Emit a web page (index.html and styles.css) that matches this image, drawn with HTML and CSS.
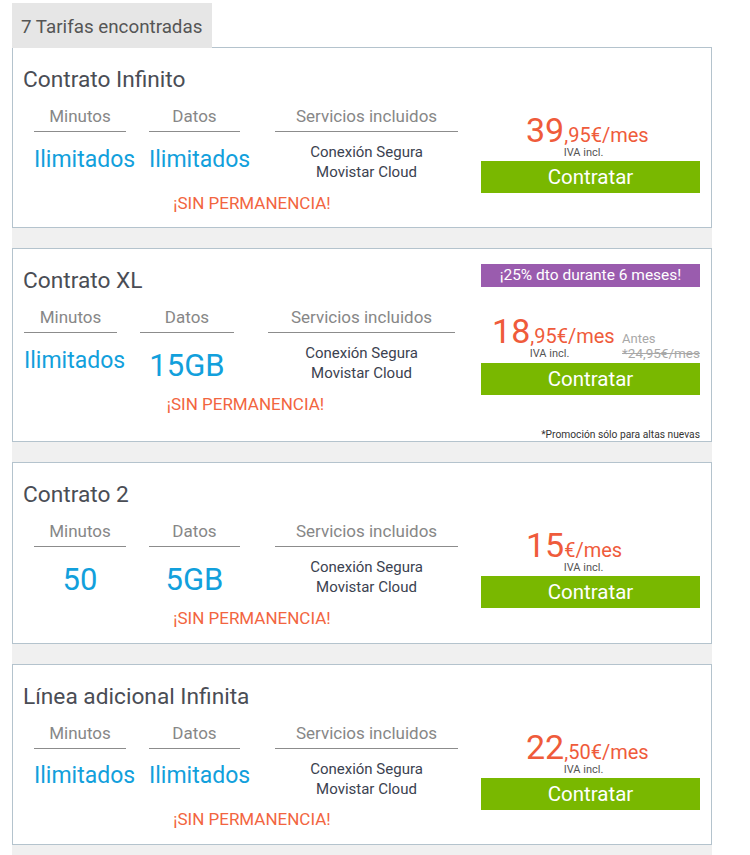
FILE: index.html
```html
<!DOCTYPE html>
<html lang="es">
<head>
<meta charset="utf-8">
<title>Tarifas</title>
<link rel="stylesheet" href="styles.css">
</head>
<body>
<div class="page">
  <div class="tab">7 Tarifas encontradas</div>
  <div class="plans">

    <article class="plan">
      <div class="plan-main">
        <h2 class="plan-title">Contrato Infinito</h2>
        <div class="specs">
          <div class="spec-head spec--min">Minutos</div>
          <div class="spec-head spec--data">Datos</div>
          <div class="spec-head spec--svc">Servicios incluidos</div>
          <div class="spec-value spec--min">Ilimitados</div>
          <div class="spec-value spec--data">Ilimitados</div>
          <div class="spec-services spec--svc">Conexión Segura<br>Movistar Cloud</div>
          <div class="spec-note">¡SIN PERMANENCIA!</div>
        </div>
      </div>
      <div class="plan-offer">
        <div class="offer-badge"></div>
        <div class="price-row">
          <div class="price-box">
            <div class="price"><span class="price-int">39</span><span class="price-dec">,95€/mes</span></div>
            <div class="price-tax">IVA incl.</div>
          </div>
        </div>
        <button class="btn" type="button">Contratar</button>
      </div>
    </article>

    <article class="plan">
      <div class="plan-main">
        <h2 class="plan-title">Contrato XL</h2>
        <div class="specs specs--wide">
          <div class="spec-head spec--min">Minutos</div>
          <div class="spec-head spec--data">Datos</div>
          <div class="spec-head spec--svc">Servicios incluidos</div>
          <div class="spec-value spec--min">Ilimitados</div>
          <div class="spec-value spec-value--big spec--data">15GB</div>
          <div class="spec-services spec--svc">Conexión Segura<br>Movistar Cloud</div>
          <div class="spec-note">¡SIN PERMANENCIA!</div>
        </div>
      </div>
      <div class="plan-offer">
        <div class="offer-badge">¡25% dto durante 6 meses!</div>
        <div class="price-row price-row--promo">
          <div class="price-box">
            <div class="price"><span class="price-int">18</span><span class="price-dec">,95€/mes</span></div>
            <div class="price-tax">IVA incl.</div>
          </div>
          <div class="price-old">
            <div class="price-old-label">Antes</div>
            <div class="price-old-value">*24,95€/mes</div>
          </div>
        </div>
        <button class="btn" type="button">Contratar</button>
        <p class="plan-footnote">*Promoción sólo para altas nuevas</p>
      </div>
    </article>

    <article class="plan">
      <div class="plan-main">
        <h2 class="plan-title">Contrato 2</h2>
        <div class="specs">
          <div class="spec-head spec--min">Minutos</div>
          <div class="spec-head spec--data">Datos</div>
          <div class="spec-head spec--svc">Servicios incluidos</div>
          <div class="spec-value spec-value--big spec--min">50</div>
          <div class="spec-value spec-value--big spec--data">5GB</div>
          <div class="spec-services spec--svc">Conexión Segura<br>Movistar Cloud</div>
          <div class="spec-note">¡SIN PERMANENCIA!</div>
        </div>
      </div>
      <div class="plan-offer">
        <div class="offer-badge"></div>
        <div class="price-row">
          <div class="price-box">
            <div class="price"><span class="price-int">15</span><span class="price-dec">€/mes</span></div>
            <div class="price-tax">IVA incl.</div>
          </div>
        </div>
        <button class="btn" type="button">Contratar</button>
      </div>
    </article>

    <article class="plan">
      <div class="plan-main">
        <h2 class="plan-title">Línea adicional Infinita</h2>
        <div class="specs">
          <div class="spec-head spec--min">Minutos</div>
          <div class="spec-head spec--data">Datos</div>
          <div class="spec-head spec--svc">Servicios incluidos</div>
          <div class="spec-value spec--min">Ilimitados</div>
          <div class="spec-value spec--data">Ilimitados</div>
          <div class="spec-services spec--svc">Conexión Segura<br>Movistar Cloud</div>
          <div class="spec-note">¡SIN PERMANENCIA!</div>
        </div>
      </div>
      <div class="plan-offer">
        <div class="offer-badge"></div>
        <div class="price-row">
          <div class="price-box">
            <div class="price"><span class="price-int">22</span><span class="price-dec">,50€/mes</span></div>
            <div class="price-tax">IVA incl.</div>
          </div>
        </div>
        <button class="btn" type="button">Contratar</button>
      </div>
    </article>

  </div>
</div>
</body>
</html>
```

FILE: styles.css
```css
body {
  margin: 0;
  background: #ffffff;
  font-family: Roboto, "Liberation Sans", sans-serif;
}

.page {
  width: 700px;
  padding: 3px 0 0 12px;
}

.tab {
  position: relative;
  z-index: 1;
  box-sizing: border-box;
  width: 200px;
  height: 45px;
  margin-bottom: -1px;
  padding: 12px 0 0 9px;
  background: #e6e6e6;
  color: #555555;
  font-size: 18.8px;
  line-height: 24px;
}

.plans {
  display: flex;
  flex-direction: column;
  gap: 20px;
  padding-bottom: 20px;
  background: #f0f0f0;
}

.plan {
  display: flex;
  border: 1px solid #b4c3cd;
  background: #ffffff;
}

.plan-main {
  flex: 1;
  min-width: 0;
  padding: 18px 0 14.5px 10px;
}

.plan-title {
  margin: 0;
  font-size: 22.7px;
  font-weight: 400;
  line-height: 27px;
  color: #4a4d55;
}

.specs {
  display: grid;
  grid-template-columns: 92px 23px 91px 35px 183px;
  margin: 13px 0 0 11px;
}

.specs--wide {
  grid-template-columns: 93px 23px 94px 34px 187px;
  margin-left: 1px;
}

.spec--min { grid-column: 1; }
.spec--data { grid-column: 3; }
.spec--svc { grid-column: 5; }

.spec-head {
  grid-row: 1;
  padding-bottom: 5px;
  border-bottom: 1px solid #8c8c8c;
  color: #878787;
  font-size: 17px;
  line-height: 20px;
  text-align: center;
}

.spec-value {
  grid-row: 2;
  padding-top: 13.5px;
  color: #12a0dc;
  font-size: 23px;
  line-height: normal;
  text-align: center;
  white-space: nowrap;
}

.spec-value--big {
  font-size: 31px;
}

.spec-services {
  grid-row: 2;
  padding-top: 10px;
  color: #3b4250;
  font-size: 15px;
  line-height: 20px;
  text-align: center;
}

.spec-note {
  grid-row: 3;
  grid-column: 1 / -1;
  margin-top: 10.5px;
  padding-left: 12px;
  color: #f26540;
  font-size: 17px;
  line-height: 20px;
  text-align: center;
}

.plan-offer {
  display: flex;
  flex-direction: column;
  width: 219px;
  margin-right: 11px;
  padding-top: 15px;
}

.offer-badge {
  height: 23px;
  background: #9a5cae;
  color: #ffffff;
  font-size: 15.5px;
  line-height: 23px;
  text-align: center;
}

.offer-badge:empty {
  background: none;
}

.price-row {
  display: flex;
  align-items: baseline;
  justify-content: center;
  margin-top: 27px;
  padding-right: 14px;
}

.price-row--promo {
  justify-content: flex-end;
  gap: 15px;
  padding-right: 0;
}

.price-box {
  flex: none;
  width: 115px;
}

.price {
  color: #ef5b3b;
  font-size: 34px;
  line-height: 34px;
  white-space: nowrap;
}

.price-dec {
  font-size: 20px;
  line-height: 1;
}

.price-tax {
  color: #555555;
  font-size: 11px;
  line-height: 11px;
  text-align: center;
}

.price-old {
  flex: none;
  color: #a8a8a8;
}

.price-old-label {
  font-size: 13px;
  line-height: 15px;
}

.price-old-value {
  font-size: 13.5px;
  line-height: 14px;
  text-decoration: line-through;
  white-space: nowrap;
}

.btn {
  display: block;
  width: 100%;
  height: 32px;
  margin-top: 3px;
  padding: 0;
  border: 0;
  background: #79b800;
  color: #ffffff;
  font-family: inherit;
  font-size: 20.5px;
  line-height: 32px;
  text-align: center;
  cursor: pointer;
}

.plan-footnote {
  margin: 34px 0 0;
  color: #333333;
  font-size: 10.25px;
  line-height: 12px;
  text-align: right;
}
```
